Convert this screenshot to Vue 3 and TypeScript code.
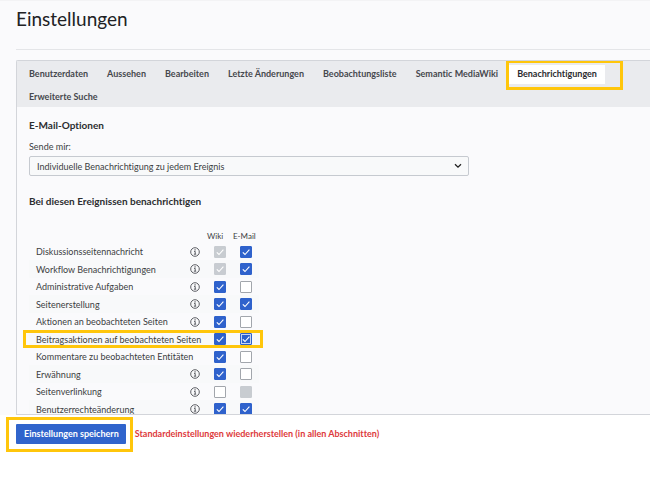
<script setup lang="ts">
import { ref } from 'vue'

interface NotificationRow {
  id: string
  label: string
  info: boolean
  wiki: boolean
  email: boolean
  wikiLocked?: boolean
  emailLocked?: boolean
  marked?: boolean
}

const tabs = [
  'Benutzerdaten',
  'Aussehen',
  'Bearbeiten',
  'Letzte Änderungen',
  'Beobachtungsliste',
  'Semantic MediaWiki',
  'Benachrichtigungen',
  'Erweiterte Suche',
]
const activeTab = ref('Benachrichtigungen')
const frequency = ref('each')

const rows = ref<NotificationRow[]>([
  { id: 'talk', label: 'Diskussionsseitennachricht', info: true, wiki: true, email: true, wikiLocked: true },
  { id: 'workflow', label: 'Workflow Benachrichtigungen', info: true, wiki: true, email: true, wikiLocked: true },
  { id: 'admin', label: 'Administrative Aufgaben', info: true, wiki: true, email: false },
  { id: 'create', label: 'Seitenerstellung', info: true, wiki: true, email: true },
  { id: 'watch', label: 'Aktionen an beobachteten Seiten', info: true, wiki: true, email: false },
  { id: 'edits', label: 'Beitragsaktionen auf beobachteten Seiten', info: false, wiki: true, email: true, marked: true },
  { id: 'comments', label: 'Kommentare zu beobachteten Entitäten', info: false, wiki: true, email: false },
  { id: 'mention', label: 'Erwähnung', info: true, wiki: true, email: false },
  { id: 'link', label: 'Seitenverlinkung', info: true, wiki: false, email: false, emailLocked: true },
  { id: 'rights', label: 'Benutzerrechteänderung', info: true, wiki: true, email: true },
])
</script>

<template>
  <form class="page" @submit.prevent>
    <h1 class="title">Einstellungen</h1>

    <main class="panel">
      <div class="tabs" role="tablist">
        <button
          v-for="tab in tabs"
          :key="tab"
          type="button"
          role="tab"
          class="tab"
          :class="{ active: tab === activeTab }"
          :aria-selected="tab === activeTab"
          @click="activeTab = tab"
        >
          {{ tab }}
          <span v-if="tab === 'Benachrichtigungen'" class="marker marker-tab"></span>
        </button>
      </div>

      <div class="content">
        <h2 class="heading">E-Mail-Optionen</h2>
        <label class="field-label" for="frequency">Sende mir:</label>
        <div class="select-wrap">
          <select id="frequency" v-model="frequency" class="select">
            <option value="each">Individuelle Benachrichtigung zu jedem Ereignis</option>
          </select>
          <svg class="chevron" viewBox="0 0 8 6" aria-hidden="true">
            <path d="M1 1.2 4 4.2 7 1.2" />
          </svg>
        </div>

        <h2 class="heading">Bei diesen Ereignissen benachrichtigen</h2>
        <table class="matrix">
          <thead>
            <tr>
              <td class="name"></td>
              <td class="info"></td>
              <th scope="col" class="choice">Wiki</th>
              <th scope="col" class="choice">E-Mail</th>
            </tr>
          </thead>
          <tbody>
            <tr v-for="row in rows" :key="row.id">
              <th scope="row" class="name">
                {{ row.label }}
                <span v-if="row.marked" class="marker marker-row"></span>
              </th>
              <td class="info">
                <svg v-if="row.info" class="info-icon" viewBox="0 0 10 10" aria-hidden="true">
                  <circle cx="5" cy="5" r="4.3" />
                  <path d="M4 4.4H5.2V7M3.9 7.2H6.2" />
                  <path class="dot" d="M4.5 2.3H5.6V3.4H4.5Z" />
                </svg>
              </td>
              <td class="choice">
                <label class="check">
                  <input v-model="row.wiki" type="checkbox" :disabled="row.wikiLocked" :aria-label="row.label + ' Wiki'" />
                  <svg v-if="row.wiki" viewBox="0 0 12 12" aria-hidden="true"><path d="M2.8 6.3 5 8.5 9.4 3.7" /></svg>
                </label>
              </td>
              <td class="choice">
                <label class="check" :class="{ focused: row.marked }">
                  <input v-model="row.email" type="checkbox" :disabled="row.emailLocked" :aria-label="row.label + ' E-Mail'" />
                  <svg v-if="row.email" viewBox="0 0 12 12" aria-hidden="true"><path d="M2.8 6.3 5 8.5 9.4 3.7" /></svg>
                </label>
              </td>
            </tr>
          </tbody>
        </table>
      </div>
    </main>

    <footer class="actions">
      <button type="submit" class="save">
        Einstellungen speichern
        <span class="marker marker-save"></span>
      </button>
      <a class="restore" href="#restore">Standardeinstellungen wiederherstellen (in allen Abschnitten)</a>
    </footer>
  </form>
</template>

<style>
body {
  margin: 0;
  background: #fafafc;
}
</style>

<style scoped>
.page {
  display: flex;
  flex-direction: column;
  height: 100vh;
  box-sizing: border-box;
  border-top: 1px solid #f3f3f5;
  color: #3c3e42;
  font-family: Lato, "Liberation Sans", sans-serif;
  font-size: 9px;
  font-variant-ligatures: none;
}

.title {
  flex: none;
  margin: 0 0 10px 16px;
  padding: 5px 0 18px;
  border-bottom: 1px solid #e4e5e8;
  color: #202124;
  font-size: 19px;
  font-weight: 400;
  line-height: 25px;
}

.panel {
  flex: 1;
  min-height: 0;
  overflow: hidden;
  margin-left: 16px;
  border: solid #d3d5da;
  border-width: 1px 0 1px 1px;
  border-radius: 2px 0 0 0;
}

.tabs {
  display: flex;
  flex-wrap: wrap;
  gap: 4px 3px;
  padding: 4px 0 0 4px;
  background: #eaebee;
}

.tab {
  position: relative;
  padding: 0 8px 2px;
  border: 0;
  background: transparent;
  color: #46484d;
  font: 700 9px/17px Lato, "Liberation Sans", sans-serif;
  font-variant-ligatures: none;
  white-space: nowrap;
}

.tab.active {
  background: #fff;
  color: #2b2c2f;
}

.marker {
  position: absolute;
  box-sizing: border-box;
  border: 3px solid #ffc60b;
  pointer-events: none;
}

.marker-tab {
  inset: -5px -18px -6px -3px;
}

.marker-row {
  inset: 0 -73px 0 -6px;
}

.marker-save {
  inset: -7px -7px -8px -10px;
}

.content {
  padding: 10px 12px 0;
}

.heading {
  margin: 0;
  color: #2c2d30;
  font-size: 10px;
  font-weight: 700;
  line-height: 16px;
}

.field-label {
  display: block;
  margin-top: 7px;
  line-height: 14px;
}

.select-wrap {
  position: relative;
  width: 440px;
  max-width: 100%;
  margin: 2px 0 17px;
}

.select {
  display: block;
  width: 100%;
  height: 20px;
  padding: 0 24px 0 7px;
  border: 1px solid #c6cad0;
  border-radius: 2px;
  appearance: none;
  background: #f8f9fa;
  color: #3c3e42;
  font: inherit;
}

.chevron {
  position: absolute;
  top: 7px;
  right: 7px;
  width: 8px;
  height: 6px;
  fill: none;
  stroke: #222;
  stroke-width: 1.3;
}

.matrix {
  width: 230px;
  margin-top: 21px;
  border-collapse: collapse;
  table-layout: fixed;
}

.matrix th,
.matrix td {
  height: 17px;
  padding: 0;
  font-weight: 400;
  line-height: 17px;
}

.matrix thead tr > * {
  height: 13px;
  line-height: 13px;
}

.matrix tbody tr:nth-child(even) > * {
  height: 18px;
}

.matrix tbody tr:nth-child(even) {
  background: #f8f9fa;
}

.matrix .name {
  position: relative;
  padding-left: 7px;
  text-align: left;
  white-space: nowrap;
}

.matrix .info {
  width: 17px;
}

.matrix .choice {
  width: 26px;
  text-align: left;
  font-size: 8px;
  white-space: nowrap;
}

.info-icon {
  display: block;
  width: 10px;
  height: 10px;
  fill: none;
  stroke: #4b4d52;
  stroke-width: 0.9;
}

.info-icon .dot {
  fill: #4b4d52;
  stroke: none;
}

.check {
  display: grid;
  width: 12px;
  height: 12px;
  margin: 0 auto;
}

.check > * {
  grid-area: 1 / 1;
}

.check input {
  box-sizing: border-box;
  width: 12px;
  height: 12px;
  margin: 0;
  border: 1px solid #a2a6ac;
  border-radius: 1px;
  appearance: none;
  background: #fff;
}

.check input:checked {
  border-color: #2f62cc;
  background: #2f62cc;
}

.check input:disabled {
  border-color: #c8ccd1;
  background: #c8ccd1;
}

.check.focused input {
  box-shadow: inset 0 0 0 1px #c5d4f3;
}

.check svg {
  width: 12px;
  height: 12px;
  fill: none;
  stroke: #fff;
  stroke-width: 1.1;
  pointer-events: none;
}

.actions {
  display: flex;
  flex: none;
  align-items: flex-start;
  gap: 9px;
  min-height: 62px;
  box-sizing: border-box;
  padding: 9px 16px 0;
  background: #fff;
}

.save {
  position: relative;
  padding: 0 7px 0 8px;
  border: 0;
  border-radius: 1px;
  background: #3064cc;
  color: #fff;
  font: 700 9px/20px Lato, "Liberation Sans", sans-serif;
  font-variant-ligatures: none;
  white-space: nowrap;
}

.restore {
  color: #dd3a3c;
  font-weight: 700;
  line-height: 20px;
  text-decoration: none;
  white-space: nowrap;
}
</style>
